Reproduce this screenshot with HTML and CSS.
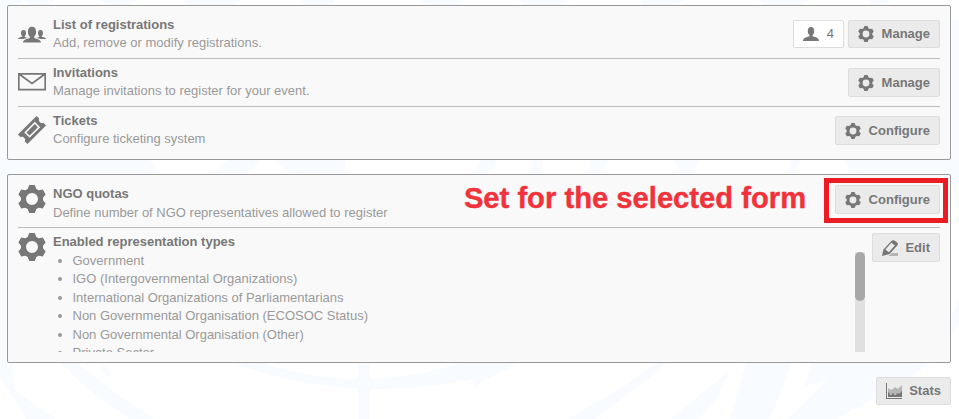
FILE: index.html
```html
<!DOCTYPE html>
<html lang="en">
<head>
    <meta charset="UTF-8">
    <meta name="viewport" content="width=device-width, initial-scale=1.0">
    <title>Registration</title>
    <link rel="stylesheet" href="styles.css">
</head>
<body>
    <svg class="emblem" viewBox="0 0 959 419">
        <path d="M0 0h22L14 60l8 60L8 160 14 400 0 376zM25 0h30l-8 6H30zM100 0h38l-10 6h-20zM182 0h60l-10 6h-44zM300 0h34v6h-28zM420 0h40v6h-36zM520 0h50l-8 6h-38zM640 0h44l-8 6h-34zM760 0h50l-10 6h-36zM870 0h20l-4 6h-14z"/>
        <path d="M0 160h150l8 14H0zM228 160h32l-14 14h-34zM275 160h70v14h-54zM480 160h18l-10 14h-14zM532 160h10v14h-12zM590 160h18l-8 14h-12zM675 160h24l-6 14h-14zM790 160h10l-4 14h-8zM845 160h114v14H850z"/>
        <path d="M952 20h7v200l-7-40zM959 300v24l-8 14v-20z"/>
        <path d="M0 372l19 22 37 25H26zM60 363h18q34 30 78 56h-26q-36-22-70-56zM100 364l8 4 3 10-8-5zM232 363h30q98 32 198 0h58l-36 18-6 8-4-10q-120 26-240-16zM358 363h12v56h-12zM655 363h11l-20 18-52 38h-26l58-34zM730 370l-14 30-18 19h-26l30-26zM746 363h46l-22 56h-40zM812 363h118l-40 28-54 28h-48l40-40-24 8z"/>
    </svg>

    <svg class="sprites">
        <symbol id="gear" viewBox="0 0 28 28">
            <path fill-rule="evenodd" d="M11.200 0h5.600l1.500 3.900 2.400 1.400 4.100-.7 2.800 4.900-2.600 3.200v2.600l2.600 3.200-2.800 4.900-4.100-.7-2.400 1.400-1.500 3.900h-5.600l-1.500-3.900-2.400-1.400-4.100.7L.4 18.500 3 15.300v-2.600L.4 9.500l2.800-4.900 4.100.7 2.400-1.400zM14 8a6 6 0 1 0 0 12 6 6 0 0 0 0-12z"/>
        </symbol>
        <symbol id="user" viewBox="0 0 16 14">
            <path d="M8 0c2 0 3.200 1.500 3.200 4 0 1.800-.6 3.300-1.600 4.100v1.200c1.200.7 6.400 1.200 6.400 4.700H0c0-3.500 5.200-4 6.400-4.700V8.100C5.400 7.300 4.800 5.800 4.800 4 4.800 1.500 6 0 8 0z"/>
        </symbol>
    </svg>

    <div class="panel">
        <div class="row">
            <svg class="row-icon" viewBox="0 0 28 28">
                <path d="M14 6.800c2.600 0 4.100 1.900 4.100 5 0 2.200-.8 3.900-1.900 4.800v1.300c1.500.9 6.800 1.200 6.800 4.600H5c0-3.400 5.300-3.700 6.800-4.600v-1.300c-1.100-.9-1.900-2.600-1.900-4.800 0-3.100 1.500-5 4.100-5z"/>
                <path d="M5.500 10c1.700 0 2.500 1.200 2.500 3 0 1.400-.5 2.500-1.200 3.100v1l2.700.8-4.500 1.200H0c0-2 3-1.800 4.200-2.400v-.6C3.400 15.500 3 14.400 3 13c0-1.800.9-3 2.500-3zM22.500 10c-1.700 0-2.500 1.200-2.500 3 0 1.400.5 2.500 1.200 3.100v1l-2.700.8 4.500 1.200h5c0-2-3-1.800-4.200-2.400v-.6c.8-.6 1.200-1.700 1.200-3.100 0-1.800-.9-3-2.500-3z"/>
            </svg>
            <div class="text">
                <div class="title">List of registrations</div>
                <div>Add, remove or modify registrations.</div>
            </div>
            <div class="toolbar">
                <span class="btn counter"><svg class="btn-icon"><use href="#user"/></svg>4</span>
                <a class="btn short"><svg class="btn-icon"><use href="#gear"/></svg>Manage</a>
            </div>
        </div>
        <div class="row">
            <svg class="row-icon" viewBox="0 0 28 28">
                <path class="line" d="M.8 5.800h26.400v15.900H.8zM1 6l13 9.500L27 6"/>
            </svg>
            <div class="text">
                <div class="title">Invitations</div>
                <div>Manage invitations to register for your event.</div>
            </div>
            <div class="toolbar">
                <a class="btn"><svg class="btn-icon"><use href="#gear"/></svg>Manage</a>
            </div>
        </div>
        <div class="row">
            <svg class="row-icon" viewBox="0 0 28 28">
                <path fill-rule="evenodd" d="M18.500 0l2.700 2.600c-1.400 2.500 1.700 5.600 4.200 4.200L28 9.500 9.500 28l-2.700-2.600c1.400-2.500-1.700-5.600-4.200-4.200L0 18.500zM16.800 5.800L6.200 16.400l5.400 5.400 10.600-10.600z"/>
                <path d="M16.800 8.100l3.100 3.100-8.300 8.300-3.100-3.100z"/>
            </svg>
            <div class="text">
                <div class="title">Tickets</div>
                <div>Configure ticketing system</div>
            </div>
            <div class="toolbar">
                <a class="btn"><svg class="btn-icon"><use href="#gear"/></svg>Configure</a>
            </div>
        </div>
    </div>

    <div class="panel compact">
        <div class="row">
            <svg class="row-icon"><use href="#gear"/></svg>
            <div class="text">
                <div class="title">NGO quotas</div>
                <div>Define number of NGO representatives allowed to register</div>
            </div>
            <div class="note">Set for the selected form</div>
            <div class="toolbar highlight">
                <a class="btn"><svg class="btn-icon"><use href="#gear"/></svg>Configure</a>
            </div>
        </div>
        <div class="row types">
            <svg class="row-icon"><use href="#gear"/></svg>
            <div class="text">
                <div class="title">Enabled representation types</div>
                <div class="scroll">
                    <ul class="type-list">
                        <li>Government</li>
                        <li>IGO (Intergovernmental Organizations)</li>
                        <li>International Organizations of Parliamentarians</li>
                        <li>Non Governmental Organisation (ECOSOC Status)</li>
                        <li>Non Governmental Organisation (Other)</li>
                        <li>Private Sector</li>
                    </ul>
                    <div class="track"><div class="thumb"></div></div>
                </div>
            </div>
            <div class="toolbar">
                <a class="btn">
                    <svg class="btn-icon" viewBox="0 0 16 16">
                        <path class="light" d="M9.500 13H16v3H6.500z"/>
                        <path fill-rule="evenodd" d="M0 16l1.400-6.500L9.400.9Q10.500-.2 12 .3l3.200 2.100q1.200 1.200.4 2.800L7.500 14zM3.400 9.400l3.400 2.800 6-6.700-3.400-2.700z"/>
                    </svg>Edit
                </a>
            </div>
        </div>
    </div>

    <div class="footer">
        <a class="btn short">
            <svg class="btn-icon" viewBox="0 0 16 16">
                <path class="light" d="M2 5l3 2 2-1 2-2 3 2 4-4v9H2z"/>
                <path d="M0 0h1v15h15v1H0zM2 9l3 3 2-2 2 2 3-2 1 1 3-3v6H2z"/>
            </svg>Stats
        </a>
    </div>
</body>
</html>
```

FILE: styles.css
```css
body {
    margin: 0;
    padding: 5px 8px 0 7px;
    font-family: "Liberation Sans", Arial, sans-serif;
    font-size: 13px;
    line-height: 18px;
    color: #999;
    background-color: #fff;
    overflow: hidden;
}

/* pale watermark behind the page */
.emblem {
    position: absolute;
    top: 0;
    left: 0;
    z-index: -1;
    width: 959px;
    height: 419px;
    fill: #f8fbff;
}

.sprites {
    display: none;
}

.panel {
    box-sizing: border-box;
    height: 155px;
    margin-bottom: 14px;
    padding: 5px 10px;
    border: 1px solid #999;
    border-radius: 2px;
    background-color: #f9f9f9;
}

.row {
    display: flex;
    box-sizing: border-box;
    height: 48px;
    padding-top: 5px;
    border-bottom: 1px solid #bbb;
}

.row:last-child {
    border-bottom: none;
}

.row-icon {
    flex: none;
    width: 28px;
    height: 28px;
    margin: 4px 7px 0 0;
    fill: #777;
}

.row-icon .line {
    fill: none;
    stroke: #777;
    stroke-width: 1.7;
}

.text {
    flex: 1;
}

.title {
    font-weight: bold;
    color: #777;
}

.toolbar {
    display: flex;
    align-items: flex-start;
    gap: 4px;
    margin-top: 4px;
}

.btn {
    display: flex;
    align-items: center;
    box-sizing: border-box;
    height: 29px;
    padding: 0 9px;
    border: 1px solid #ddd;
    border-radius: 2px;
    font-weight: bold;
    color: #777;
    background-color: #ebebeb;
}

.btn.short,
.btn.counter {
    height: 28px;
}

.btn.counter {
    font-weight: normal;
    background-color: #fff;
}

.btn-icon {
    width: 16px;
    height: 16px;
    margin-right: 7.5px;
    fill: #777;
}

.light {
    fill: #b5b5b5;
}

.compact {
    height: 189px;
}

.compact .row-icon,
.compact .toolbar {
    margin-top: 0;
}

.compact .text {
    line-height: 18.57px;
}

.note {
    margin-right: 29px;
    font-size: 29.2px;
    font-weight: bold;
    line-height: 27px;
    color: #f2323a;
    -webkit-text-stroke: 0.4px #f2323a;
}

.highlight {
    position: relative;
}

/* frame drawn over the button */
.highlight::after {
    content: "";
    position: absolute;
    top: -7px;
    right: -8px;
    left: -11px;
    height: 35px;
    border: 5px solid #ed1c24;
}

.compact .types {
    height: auto;
}

.scroll {
    display: flex;
    justify-content: space-between;
    height: 100px;
    margin-right: 7px;
    overflow: hidden;
}

.type-list {
    margin: 0;
    padding-left: 19.5px;
}

.track {
    width: 10px;
    background-color: #e0e0e0;
}

.thumb {
    height: 49px;
    border-radius: 5px;
    background-color: #a8a8a8;
}

.footer {
    display: flex;
    justify-content: flex-end;
}
```
